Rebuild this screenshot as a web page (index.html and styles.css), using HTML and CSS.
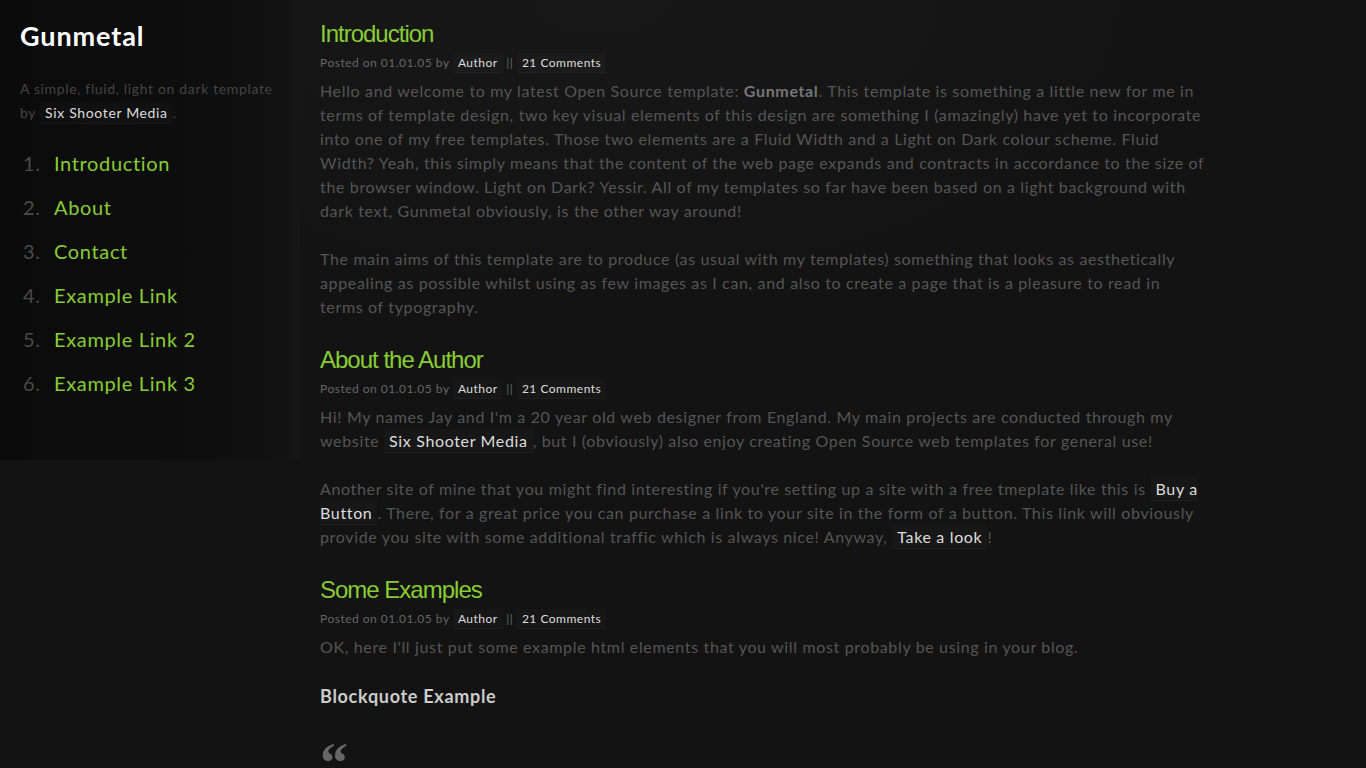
FILE: index.html
```
<html lang="en">
<head>
    <meta charset="UTF-8">
    <meta name="viewport" content="width=device-width, initial-scale=1.0">
    <title>Gunmetal</title>
    <link rel="stylesheet" href="styles.css">
</head>
<body>
    <div class="wrapper">
        <div class="sidebar">
            <h1 class="logo">Gunmetal</h1>
            <p class="tagline">A simple, fluid, light on dark template by <a href="#">Six Shooter Media</a>.</p>

            <ol class="nav">
                <li><a href="#">Introduction</a></li>
                <li><a href="#">About</a></li>
                <li><a href="#">Contact</a></li>
                <li><a href="#">Example Link</a></li>
                <li><a href="#">Example Link 2</a></li>
                <li><a href="#">Example Link 3</a></li>
            </ol>
        </div>

        <div class="content">
            <div class="post">
                <h2>Introduction</h2>
                <p class="meta">Posted on 01.01.05 by <a href="#">Author</a> || <a href="#">21 Comments</a></p>
                <p>Hello and welcome to my latest Open Source template: <strong>Gunmetal</strong>. This template is something a little new for me in terms of template design, two key visual elements of this design are something I (amazingly) have yet to incorporate into one of my free templates. Those two elements are a Fluid Width and a Light on Dark colour scheme. Fluid Width? Yeah, this simply means that the content of the web page expands and contracts in accordance to the size of the browser window. Light on Dark? Yessir. All of my templates so far have been based on a light background with dark text, Gunmetal obviously, is the other way around!</p>
                <p>The main aims of this template are to produce (as usual with my templates) something that looks as aesthetically appealing as possible whilst using as few images as I can, and also to create a page that is a pleasure to read in terms of typography.</p>
            </div>

            <div class="post">
                <h2>About the Author</h2>
                <p class="meta">Posted on 01.01.05 by <a href="#">Author</a> || <a href="#">21 Comments</a></p>
                <p>Hi! My names Jay and I'm a 20 year old web designer from England. My main projects are conducted through my website <a href="#">Six Shooter Media</a>, but I (obviously) also enjoy creating Open Source web templates for general use!</p>
                <p>Another site of mine that you might find interesting if you're setting up a site with a free tmeplate like this is <a href="#">Buy a Button</a>. There, for a great price you can purchase a link to your site in the form of a button. This link will obviously provide you site with some additional traffic which is always nice! Anyway, <a href="#">Take a look</a>!</p>
            </div>

            <div class="post">
                <h2>Some Examples</h2>
                <p class="meta">Posted on 01.01.05 by <a href="#">Author</a> || <a href="#">21 Comments</a></p>
                <p>OK, here I'll just put some example html elements that you will most probably be using in your blog.</p>
                <h3>Blockquote Example</h3>
                <blockquote>
                    <span class="quote-mark">&ldquo;</span>
                </blockquote>
            </div>
        </div>
    </div>
</body>
</html>
```

FILE: styles.css
```
* {
    margin: 0;
    padding: 0;
    box-sizing: border-box;
}

body {
    background: #131313;
    color: #555;
    font-family: 'Lato', 'DejaVu Sans', sans-serif;
    font-size: 16px;
    letter-spacing: 0.65px;
    min-height: 100vh;
}

a {
    text-decoration: none;
}

.wrapper {
    display: flex;
    align-items: flex-start;
}

/* sidebar */

.sidebar {
    width: 300px;
    flex-shrink: 0;
    min-height: 460px;
    padding: 20px 20px 0 20px;
    background: linear-gradient(to right, #0b0b0b 0%, #0e0e0e 70%, #121212 95%, #161616 100%);
}

.logo {
    color: #fff;
    font-size: 27px;
    font-weight: bold;
    letter-spacing: 0.9px;
    line-height: 32px;
}

.tagline {
    margin-top: 25px;
    font-size: 14px;
    line-height: 24px;
    color: #444;
}

.tagline a,
.content p a {
    color: #ddd;
    background: rgba(255, 255, 255, 0.02);
    border-bottom: 1px solid rgba(255, 255, 255, 0.035);
    padding: 2px 5px;
}

.nav {
    list-style: none;
    counter-reset: nav;
    margin-top: 16px;
    padding-left: 3px;
    font-size: 20px;
    line-height: 44px;
}

.nav li {
    counter-increment: nav;
    display: flex;
}

.nav li::before {
    content: counter(nav) ".";
    color: #4a4a4a;
    width: 31px;
}

.nav a {
    color: #8c3;
}

/* content */

.content {
    width: 928px;
    padding: 18px 20px 0 20px;
    min-height: 768px;
    background: radial-gradient(ellipse 600px 320px at 300px 0, #181818, rgba(19, 19, 19, 0));
}

.post {
    margin-bottom: 25px;
}

.post h2 {
    font-family: 'Liberation Sans', Arial, sans-serif;
    font-weight: normal;
    font-size: 24px;
    letter-spacing: -1px;
    line-height: 32px;
    color: #8c3;
}

.post p {
    line-height: 24px;
    margin-bottom: 24px;
}

.post p.meta {
    font-size: 12px;
    letter-spacing: 0.5px;
    line-height: 26px;
    color: #666;
    margin-bottom: 3px;
}

.meta a {
    color: #aaa;
    background: rgba(255, 255, 255, 0.01);
    border-bottom: 1px solid rgba(255, 255, 255, 0.03);
    padding: 2px 6px 3px 6px;
}

.post strong {
    color: #777;
}

.post h3 {
    color: #ccc;
    font-size: 18px;
    font-weight: bold;
    letter-spacing: 0.7px;
    line-height: 24px;
    margin-top: 25px;
    margin-bottom: 30px;
}

.quote-mark {
    display: block;
    font-family: 'Liberation Serif', serif;
    font-size: 56px;
    font-weight: bold;
    line-height: 50px;
    color: #666;
    height: 40px;
}
```
